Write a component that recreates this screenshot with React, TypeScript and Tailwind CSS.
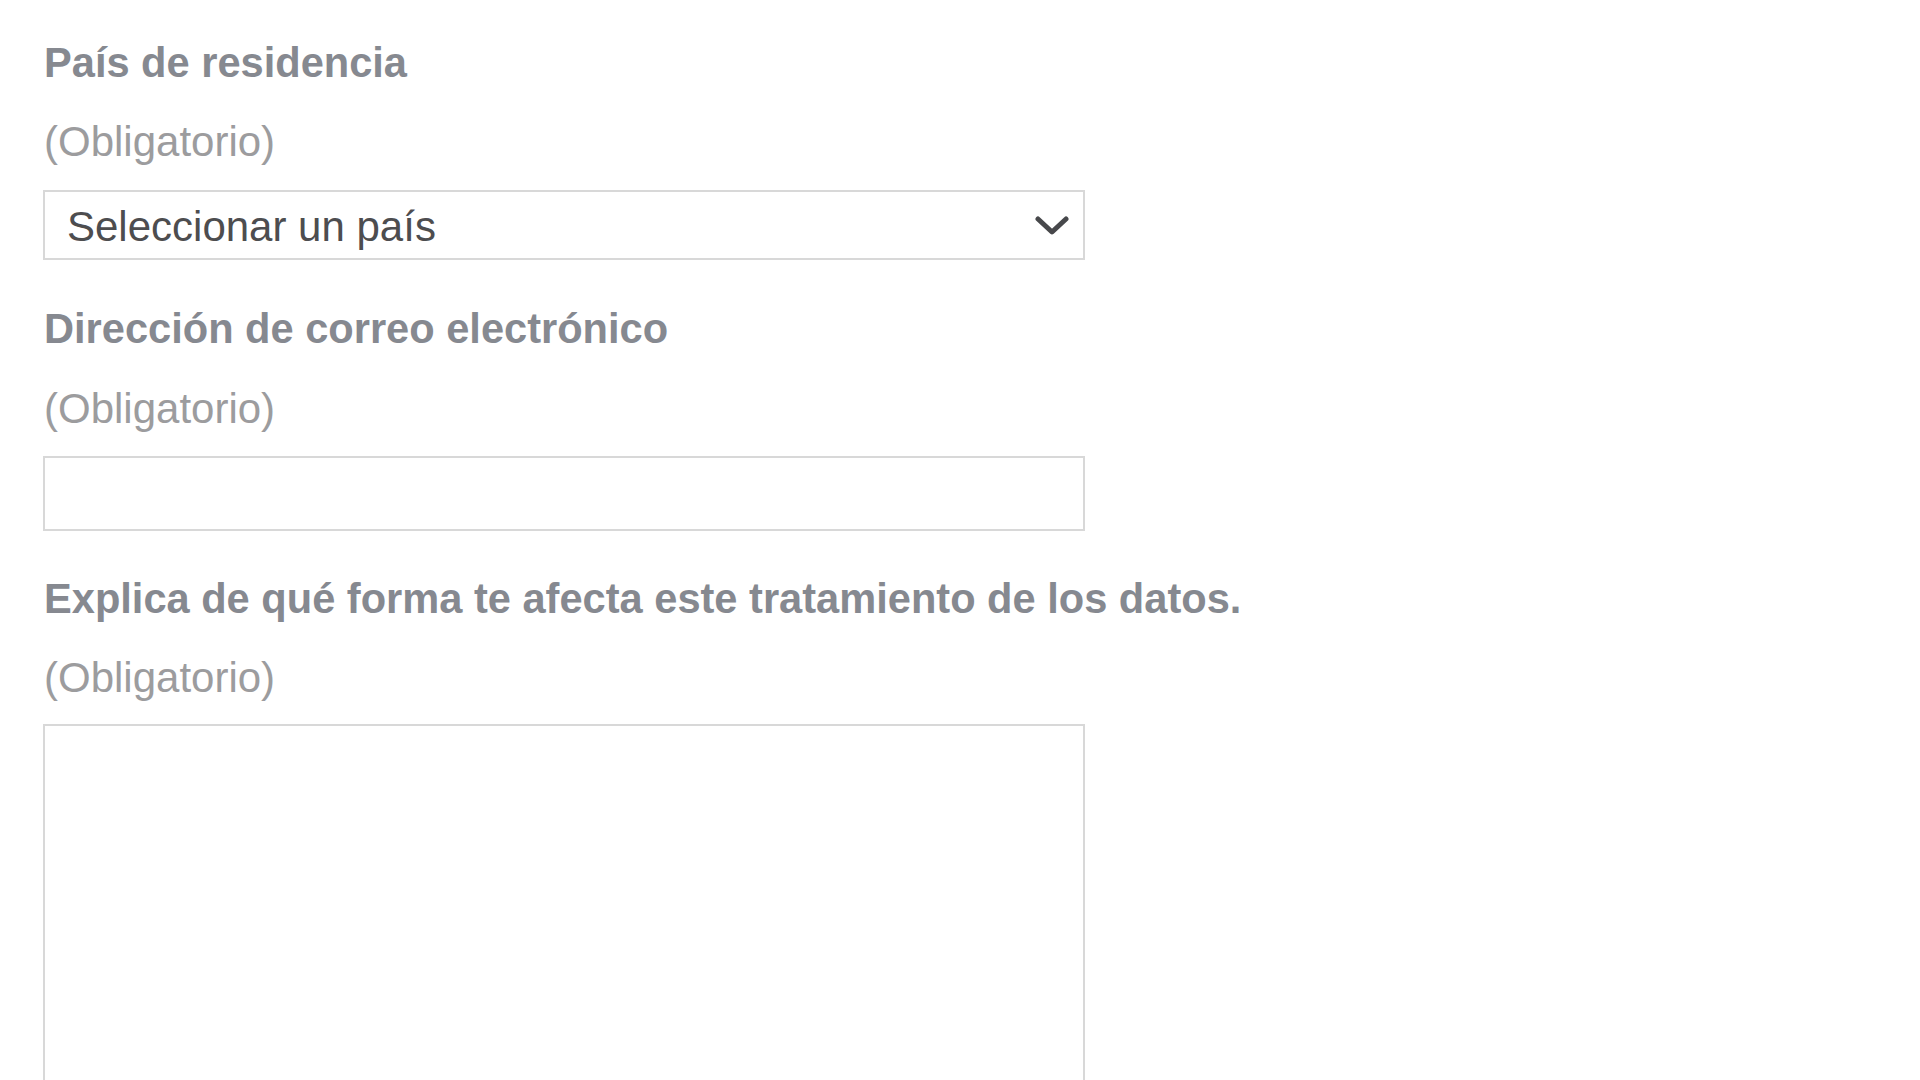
import React from 'react';

const labelCls = "block whitespace-nowrap text-[41.6px] leading-[48px] font-bold text-[#868990]";
const hintCls = "block whitespace-nowrap text-[42px] leading-[48px] text-[#9c9c9e]";

export default function App() {
  return (
    <div
      className="h-screen w-full bg-white overflow-hidden pl-[44px] pt-[39px]"
      style={{ fontFamily: '"Liberation Sans", Arial, sans-serif' }}
    >
      <div className="flex flex-col w-[1041px]">
        <label className={labelCls}>País de residencia</label>
        <span className={`${hintCls} mt-[31px]`}>(Obligatorio)</span>
        <div className="mt-[24px] h-[70px] -ml-[1px] border-2 border-[#d8d8d8] bg-white flex items-center justify-between pl-[22px] pr-[14px]">
          <span className="text-[42px] leading-none text-[#4d4d4f] pt-[4px]">Seleccionar un país</span>
          <svg width="34" height="20" viewBox="0 0 34 20" fill="none" className="mt-[2px]">
            <polyline points="3,3 17,16 31,3" stroke="#47484b" strokeWidth="5" strokeLinecap="round" strokeLinejoin="round" />
          </svg>
        </div>

        <label className={`${labelCls} mt-[45px]`}>Dirección de correo electrónico</label>
        <span className={`${hintCls} mt-[32px]`}>(Obligatorio)</span>
        <input
          type="text"
          className="mt-[23px] h-[75px] -ml-[1px] border-2 border-[#d8d8d8] bg-white outline-none"
        />

        <label className={`${labelCls} mt-[44px]`}>Explica de qué forma te afecta este tratamiento de los datos.</label>
        <span className={`${hintCls} mt-[31px]`}>(Obligatorio)</span>
        <textarea className="mt-[22px] h-[380px] shrink-0 -ml-[1px] border-2 border-[#d8d8d8] bg-white outline-none resize-none" />
      </div>
    </div>
  );
}
